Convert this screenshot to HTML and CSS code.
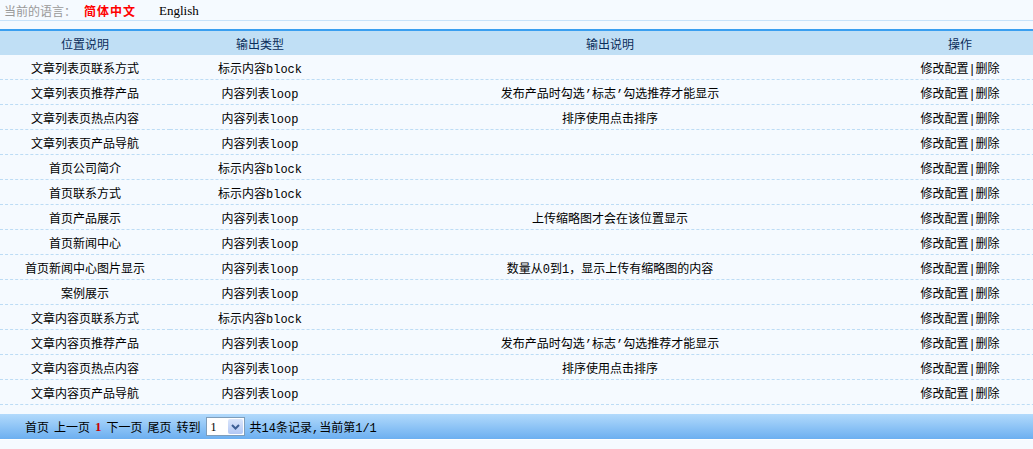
FILE: index.html
```html
<!DOCTYPE html>
<html lang="zh-CN">
<head>
    <meta charset="UTF-8">
    <title>标签管理</title>
    <link rel="stylesheet" href="styles.css">
</head>
<body>
<div class="lang-bar">
    <span class="lang-label">当前的语言：</span>
    <a class="lang current" href="#">简体中文</a>
    <a class="lang" href="#">English</a>
</div>

<table class="list">
    <colgroup>
        <col style="width: 170px">
        <col style="width: 180px">
        <col style="width: 520px">
        <col style="width: 180px">
    </colgroup>
    <thead>
        <tr>
            <th>位置说明</th>
            <th>输出类型</th>
            <th>输出说明</th>
            <th>操作</th>
        </tr>
    </thead>
    <tbody id="rows"></tbody>
</table>

<div class="pager">
    <a href="#">首页</a>
    <a href="#">上一页</a>
    <b class="page-now">1</b>
    <a href="#">下一页</a>
    <a href="#">尾页</a>
    <span>转到</span>
    <span class="jump">
        <select>
            <option>1</option>
        </select>
        <span class="jump-btn">
            <svg width="9" height="6" viewBox="0 0 9 6"><path d="M1 1 L4.5 4.5 L8 1" fill="none" stroke="#3d5f95" stroke-width="2"/></svg>
        </span>
    </span>
    <span>共14条记录,当前第1/1</span>
</div>

<script>
    // 标签列表：位置 / 类型 / 说明
    const tags = [
        ["文章列表页联系方式", "标示内容block", ""],
        ["文章列表页推荐产品", "内容列表loop", "发布产品时勾选’标志’勾选推荐才能显示"],
        ["文章列表页热点内容", "内容列表loop", "排序使用点击排序"],
        ["文章列表页产品导航", "内容列表loop", ""],
        ["首页公司简介", "标示内容block", ""],
        ["首页联系方式", "标示内容block", ""],
        ["首页产品展示", "内容列表loop", "上传缩略图才会在该位置显示"],
        ["首页新闻中心", "内容列表loop", ""],
        ["首页新闻中心图片显示", "内容列表loop", "数量从0到1，显示上传有缩略图的内容"],
        ["案例展示", "内容列表loop", ""],
        ["文章内容页联系方式", "标示内容block", ""],
        ["文章内容页推荐产品", "内容列表loop", "发布产品时勾选’标志’勾选推荐才能显示"],
        ["文章内容页热点内容", "内容列表loop", "排序使用点击排序"],
        ["文章内容页产品导航", "内容列表loop", ""]
    ];

    const tbody = document.getElementById('rows');
    tags.forEach(t => {
        tbody.innerHTML += `<tr>
            <td>${t[0]}</td>
            <td>${t[1]}</td>
            <td>${t[2]}</td>
            <td><a href="#">修改配置</a>|<a href="#">删除</a></td>
        </tr>`;
    });
</script>
</body>
</html>
```

FILE: styles.css
```css
html, body {
    overflow: hidden;
}
body {
    margin: 0;
    background-color: #f5faff;
    font-family: "Liberation Mono", "Noto Sans CJK SC", monospace;
    font-size: 12px;
    color: #000;
}
a {
    color: #000;
    text-decoration: none;
}

.lang-bar {
    height: 20px;
    line-height: 17px;
    padding-left: 4px;
    border-bottom: 1px solid #c8e3fa;
    display: flex;
    align-items: center;
}
.lang-label {
    color: #999;
    font-family: "Noto Sans CJK SC", sans-serif;
}
.lang {
    margin-left: 16px;
    font-family: "Liberation Serif", "Noto Sans CJK SC", serif;
    font-size: 13px;
}
.lang.current {
    color: #f00;
    font-weight: bold;
    font-family: "Noto Sans CJK SC", sans-serif;
    font-size: 12px;
    letter-spacing: 1px;
    margin-left: 8px;
    margin-right: 7px;
}

.list {
    margin-top: 8px;
    width: 1050px;
    table-layout: fixed;
    border-collapse: collapse;
    border-top: 2px solid #3a9ff0;
}
.list th {
    height: 24px;
    padding: 0;
    background-color: #c0dff5;
    color: #0b2d5a;
    font-weight: normal;
    font-family: "Noto Sans CJK SC", sans-serif;
    text-align: center;
}
.list td {
    height: 22px;
    padding: 2px 0 0;
    text-align: center;
    border-bottom: 1px dashed #bcdcf5;
    white-space: nowrap;
}

.pager {
    margin-top: 9px;
    height: 25px;
    padding-left: 25px;
    display: flex;
    align-items: center;
    gap: 5px;
    background: linear-gradient(#b2dafc, #6caff0);
    border-bottom: 1px solid #fff;
}
.page-now {
    color: #c00;
    font-family: "Liberation Serif", serif;
    font-size: 13px;
}
.jump {
    position: relative;
    display: inline-block;
    width: 39px;
    height: 19px;
}
.jump select {
    appearance: none;
    width: 39px;
    height: 19px;
    margin: 0;
    padding: 0 0 0 4px;
    border: 1px solid #7f9db9;
    background: #fff;
    font-family: "Liberation Serif", serif;
    font-size: 12px;
}
.jump-btn {
    position: absolute;
    top: 2px;
    right: 2px;
    width: 15px;
    height: 15px;
    background: linear-gradient(#dbe6fb, #b3c8f5);
    border-radius: 2px;
    display: flex;
    align-items: center;
    justify-content: center;
    pointer-events: none;
}
```
